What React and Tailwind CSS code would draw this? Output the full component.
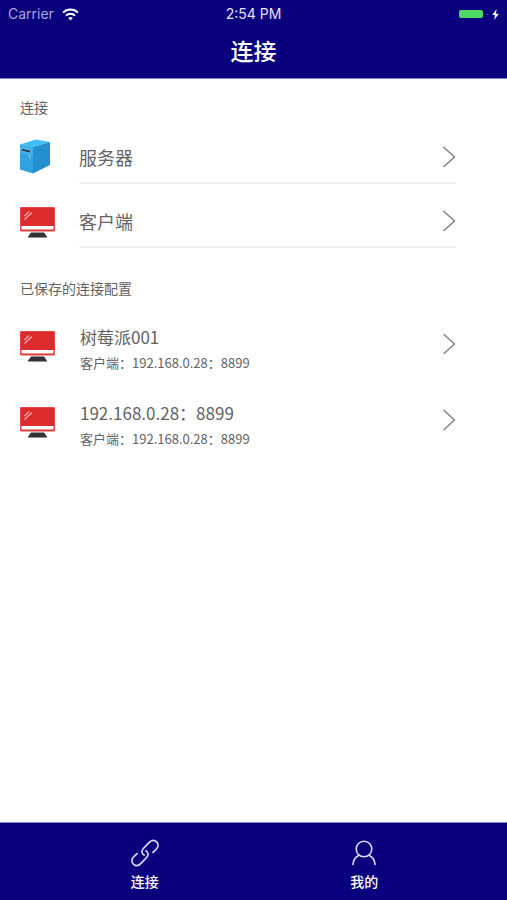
function WifiIcon() {
  return (
    <svg width="17" height="13" viewBox="0 0 17 13" fill="none" stroke="#ffffff" strokeWidth="2">
      <path d="M1 4.6C5.2 0.4 11.8 0.4 16 4.6" />
      <path d="M3.9 7.6C6.5 5 10.5 5 13.1 7.6" />
      <path d="M8.5 12.4L6.2 10C7.5 8.8 9.5 8.8 10.8 10Z" fill="#ffffff" stroke="none" />
    </svg>
  );
}

function BoltIcon() {
  return (
    <svg width="7" height="11" viewBox="0 0 7 11" fill="#ffffff">
      <path d="M4.6 0L0.3 6H3L2.2 11L6.8 4.7H4Z" />
    </svg>
  );
}

function ServerIcon() {
  return (
    <svg width="30" height="35" viewBox="0 0 30 35">
      <path d="M0 5.5L16 0.5L30 3L13 8Z" fill="#3fc0f2" />
      <path d="M0 5.5L13 8V34.5L0 30.5Z" fill="#2fa2e0" />
      <path d="M13 8L30 3V26L13 34.5Z" fill="#248fd0" />
      <path d="M0 5.5L13 8V17L0 14.5Z" fill="#3cb0e8" />
      <path d="M1.5 8.8L11 10.6V14L1.5 12.2Z" fill="#74bddb" />
      <path d="M2 9.8L10.2 11.4V13.4L2 11.8Z" fill="#1a4257" />
      <path d="M8 16L10 16.5V20.5" fill="none" stroke="#7fcdf3" />
    </svg>
  );
}

function MonitorIcon() {
  return (
    <svg width="35" height="36" viewBox="0 -5 35 36">
      <rect x="0.5" y="0.5" width="34" height="23.5" rx="0.5" fill="#dd2a2c" stroke="#e2484a" />
      <rect x="1.5" y="19" width="32" height="3.5" fill="#ffffff" />
      <path d="M4.5 9L9 4.5M4.5 12.5L12 5.5" stroke="#f7b4b4" strokeWidth="1.1" />
      <path d="M11 25.5H24L27.5 30.5H7.5Z" fill="#333335" />
    </svg>
  );
}

function ChevronIcon() {
  return (
    <svg width="13" height="22" viewBox="0 0 13 22" fill="none" stroke="#808080" strokeWidth="1.4">
      <path d="M0.5 1L11.5 11L0.5 21" />
    </svg>
  );
}

function LinkIcon() {
  return (
    <svg width="28" height="28" viewBox="0 0 28 28" fill="none" stroke="#dcdcf5" strokeWidth="1.7" strokeLinecap="round">
      <path d="M13.2 16.2C10.4 14.6 10.3 11.6 12.4 9.5L18 3.6C20.2 1.2 23.2 0.8 25.4 2.7C27.7 4.8 27.5 7.8 25.5 10L22 13.4" />
      <path d="M14.8 11.8C17.6 13.4 17.7 16.4 15.6 18.5L10 24.4C7.8 26.8 4.8 27.2 2.6 25.3C0.3 23.2 0.5 20.2 2.5 18L6 14.6" />
    </svg>
  );
}

function UserIcon() {
  return (
    <svg width="24" height="26" viewBox="0 0 24 26" fill="none" stroke="#dcdcf5" strokeWidth="1.6" strokeLinecap="round">
      <circle cx="12" cy="9" r="7.8" />
      <path d="M7 15.3C3.5 17.2 1.2 20.5 1 24.5" />
      <path d="M17 15.3C20.5 17.2 22.8 20.5 23 24.5" />
    </svg>
  );
}

const connections = [
  { id: 'server', name: '服务器', icon: <ServerIcon /> },
  { id: 'client', name: '客户端', icon: <MonitorIcon /> },
];

const saved = [
  { id: 1, name: '树莓派001', detail: '客户端：192.168.0.28：8899' },
  { id: 2, name: '192.168.0.28：8899', detail: '客户端：192.168.0.28：8899' },
];

const tabs = [
  { id: 'connect', label: '连接', icon: <LinkIcon /> },
  { id: 'mine', label: '我的', icon: <UserIcon /> },
];

function Header() {
  return (
    <header className="border-b border-[#8a84cc] bg-[#0a007d] text-white">
      <div className="grid h-7 grid-cols-3 items-center px-2 font-['Inter',sans-serif] text-sm leading-7">
        <div className="flex items-center gap-2 text-[#aaa6dc]">
          Carrier
          <WifiIcon />
        </div>
        <div className="text-center text-[#e4e2f7]">2:54 PM</div>
        <div className="flex items-center justify-end gap-1">
          <span className="h-2 w-6 rounded-xs bg-[#4cd964]" />
          <span className="size-px bg-[#7772c0]" />
          <BoltIcon />
        </div>
      </div>
      <h1 className="h-[50px] text-center text-[23px] leading-11 font-medium">连接</h1>
    </header>
  );
}

function ConnectionRow({ item }) {
  return (
    <li>
      <button type="button" className="flex h-16 w-full items-stretch text-left">
        <span className="flex w-[59px] shrink-0 items-center pt-2">{item.icon}</span>
        <span className="flex flex-1 items-center justify-between border-b-2 border-[#efefef] pt-3 text-lg">
          {item.name}
          <ChevronIcon />
        </span>
      </button>
    </li>
  );
}

function SavedRow({ item }) {
  return (
    <li>
      <button type="button" className="flex h-[76px] w-full items-center text-left">
        <span className="w-[60px] shrink-0">
          <MonitorIcon />
        </span>
        <span className="flex flex-1 flex-col pt-1.5">
          <span className="text-[17px] leading-8">{item.name}</span>
          <span className="text-[13px] leading-5">{item.detail}</span>
        </span>
        <ChevronIcon />
      </button>
    </li>
  );
}

function App() {
  return (
    <div className="flex min-h-screen flex-col bg-white font-['Noto_Sans_CJK_SC',sans-serif] text-[#636363]">
      <Header />

      <main className="flex-1 pr-[51px] pl-5">
        <section className="pt-[18px]">
          <h2 className="pb-[3px] text-sm">连接</h2>
          <ul>
            {connections.map((item) => (
              <ConnectionRow key={item.id} item={item} />
            ))}
          </ul>
        </section>

        <section className="pt-[30px]">
          <h2 className="pb-2 text-sm">已保存的连接配置</h2>
          <ul>
            {saved.map((item) => (
              <SavedRow key={item.id} item={item} />
            ))}
          </ul>
        </section>
      </main>

      <nav className="flex h-[78px] border-t border-[#8a84cc] bg-[#0a007d] pr-[33px] pl-[35px] text-white">
        {tabs.map((tab) => (
          <a key={tab.id} href={`#${tab.id}`} className="flex flex-1 flex-col items-center pt-4">
            <span className="flex h-7 items-center">{tab.icon}</span>
            <span className="pt-1 text-sm leading-5 font-medium">{tab.label}</span>
          </a>
        ))}
      </nav>
    </div>
  );
}

export default App;
